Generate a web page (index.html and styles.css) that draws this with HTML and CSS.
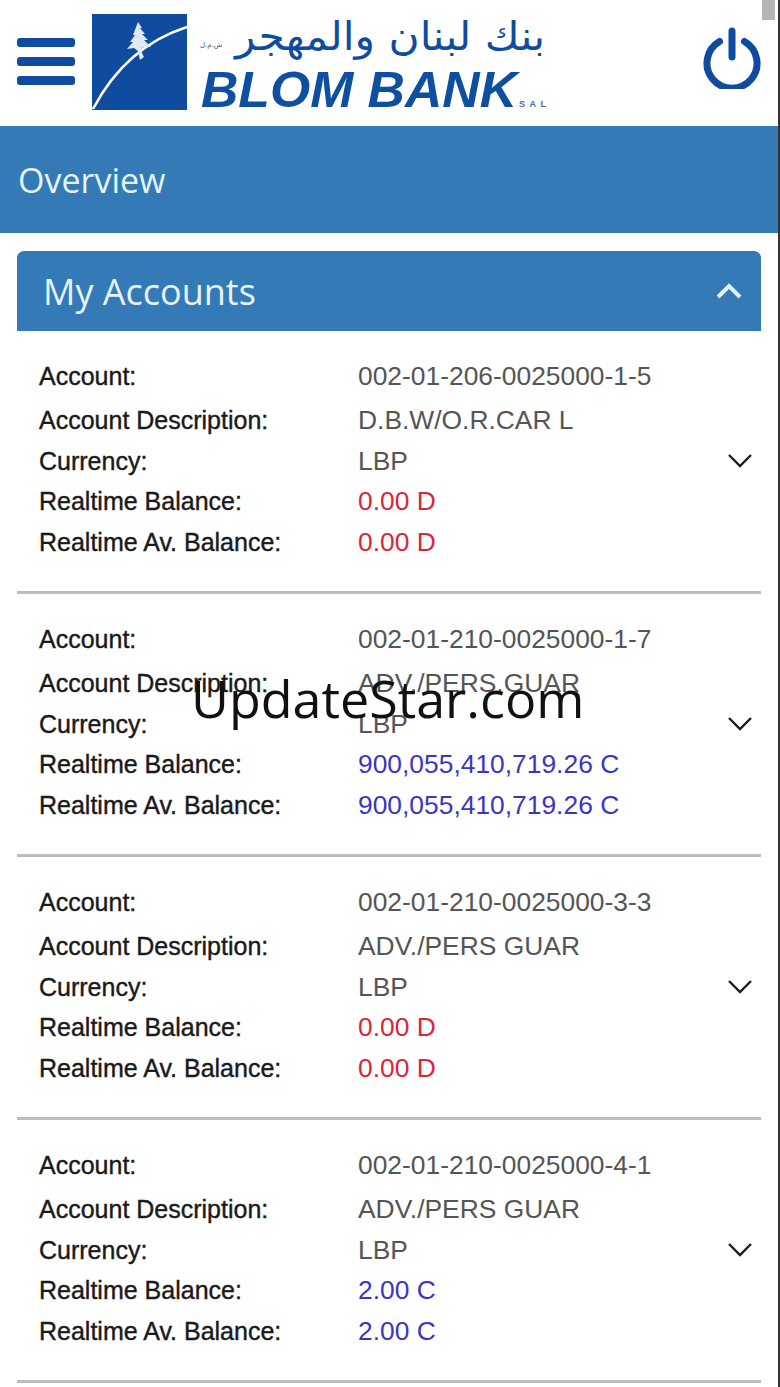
FILE: index.html
```html
<!DOCTYPE html>
<html lang="en">
<head>
<meta charset="utf-8">
<title>BLOM BANK - Overview</title>
<link rel="stylesheet" href="styles.css">
</head>
<body>
<div class="page">
  <header class="topbar">
    <div class="burger"><span></span><span></span><span></span></div>
    <svg class="logo" width="456" height="98" viewBox="0 0 456 98">
      <rect x="1" y="1" width="95" height="96" fill="#0f4c9f"/>
      <path d="M2 96 C 22 58 52 28 96 14" fill="none" stroke="#fff" stroke-width="2.6"/>
      <path d="M47 9 L51 15 L49 15 L54 21 L51 21 L57 27 L53 27 L60 34 L52 34 L50 38 L53 44 L49 47 L47 38 L43 35 L36 36 L42 29 L39 29 L44 22 L42 22 Z" fill="#dfe8f3"/>
      <text class="ar" x="454" y="37" text-anchor="end" textLength="310" lengthAdjust="spacingAndGlyphs">بنك لبنان والمهجر</text>
      <text class="ar-small" x="109" y="34">ش.م.ل</text>
      <text class="brand" x="110" y="94" textLength="316" lengthAdjust="spacingAndGlyphs">BLOM BANK</text>
      <text class="sal" x="428" y="94" textLength="27" lengthAdjust="spacing">SAL</text>
    </svg>
    <svg class="power" width="58" height="62" viewBox="0 0 58 62">
      <path d="M16.500 14.500 A25 25 0 1 0 41.500 14.500" fill="none" stroke="#0f4c9f" stroke-width="7" stroke-linecap="round"/>
      <path d="M29 4 V30" fill="none" stroke="#0f4c9f" stroke-width="7" stroke-linecap="round"/>
    </svg>
  </header>
  <div class="title-bar">Overview</div>
  <section class="panel">
    <div class="panel-head">
      <span>My Accounts</span>
      <svg class="chev-up" width="28" height="18" viewBox="0 0 28 18"><path d="M3 15 L14 4 L25 15" fill="none" stroke="#e4f4fb" stroke-width="4"/></svg>
    </div>

    <article class="account">
      <dl class="fields">
        <dt class="first">Account:</dt><dd class="first">002-01-206-0025000-1-5</dd>
        <dt>Account Description:</dt><dd>D.B.W/O.R.CAR L</dd>
        <dt>Currency:</dt><dd>LBP</dd>
        <dt>Realtime Balance:</dt><dd class="debit">0.00 D</dd>
        <dt>Realtime Av. Balance:</dt><dd class="debit">0.00 D</dd>
      </dl>
      <svg class="chev" width="26" height="16" viewBox="0 0 26 16"><path d="M2 2 L13 13 L24 2" fill="none" stroke="#1c1c1c" stroke-width="2.400"/></svg>
    </article>

    <article class="account">
      <dl class="fields">
        <dt class="first">Account:</dt><dd class="first">002-01-210-0025000-1-7</dd>
        <dt>Account Description:</dt><dd>ADV./PERS.GUAR</dd>
        <dt>Currency:</dt><dd>LBP</dd>
        <dt>Realtime Balance:</dt><dd class="credit">900,055,410,719.26 C</dd>
        <dt>Realtime Av. Balance:</dt><dd class="credit">900,055,410,719.26 C</dd>
      </dl>
      <svg class="chev" width="26" height="16" viewBox="0 0 26 16"><path d="M2 2 L13 13 L24 2" fill="none" stroke="#1c1c1c" stroke-width="2.400"/></svg>
    </article>

    <article class="account">
      <dl class="fields">
        <dt class="first">Account:</dt><dd class="first">002-01-210-0025000-3-3</dd>
        <dt>Account Description:</dt><dd>ADV./PERS GUAR</dd>
        <dt>Currency:</dt><dd>LBP</dd>
        <dt>Realtime Balance:</dt><dd class="debit">0.00 D</dd>
        <dt>Realtime Av. Balance:</dt><dd class="debit">0.00 D</dd>
      </dl>
      <svg class="chev" width="26" height="16" viewBox="0 0 26 16"><path d="M2 2 L13 13 L24 2" fill="none" stroke="#1c1c1c" stroke-width="2.400"/></svg>
    </article>

    <article class="account">
      <dl class="fields">
        <dt class="first">Account:</dt><dd class="first">002-01-210-0025000-4-1</dd>
        <dt>Account Description:</dt><dd>ADV./PERS GUAR</dd>
        <dt>Currency:</dt><dd>LBP</dd>
        <dt>Realtime Balance:</dt><dd class="credit">2.00 C</dd>
        <dt>Realtime Av. Balance:</dt><dd class="credit">2.00 C</dd>
      </dl>
      <svg class="chev" width="26" height="16" viewBox="0 0 26 16"><path d="M2 2 L13 13 L24 2" fill="none" stroke="#1c1c1c" stroke-width="2.400"/></svg>
    </article>
  </section>
  <div class="scroll-thumb"></div>
  <div class="watermark">UpdateStar.com</div>
</div>
</body>
</html>
```
FILE: styles.css
```css
* { box-sizing: border-box; }
html, body { margin: 0; padding: 0; background: #fff; }
body { height: 1387px; overflow: hidden; }
.page {
  position: relative;
  width: 780px;
  height: 1387px;
  overflow: hidden;
  border-right: 2px solid #333;
  font-family: "Liberation Sans", Arial, sans-serif;
}
.topbar {
  display: flex;
  align-items: flex-start;
  height: 126px;
  padding: 0 17px;
}
.burger {
  display: flex;
  flex-direction: column;
  gap: 10px;
  width: 58px;
  margin-top: 38px;
}
.burger span {
  display: block;
  height: 9px;
  border-radius: 3px;
  background: #0f4c9f;
}
.logo { margin: 13px 0 0 16px; flex: none; }
.power { margin: 27px 0 0 auto; flex: none; }
.ar { font-family: "DejaVu Sans", sans-serif; font-size: 40px; fill: #0f4c9f; }
.ar-small { font-family: "DejaVu Sans", sans-serif; font-size: 7px; fill: #456; }
.brand { font-family: "Liberation Sans", sans-serif; font-size: 50px; font-weight: 700; font-style: italic; fill: #0f4fa0; }
.sal { font-family: "Liberation Sans", sans-serif; font-size: 9px; font-weight: 700; fill: #3d6fae; }
.title-bar {
  display: flex;
  align-items: center;
  height: 107px;
  padding-left: 18px;
  background: #337ab7;
  color: #e6f3fa;
  font-family: "Open Sans", sans-serif;
  font-size: 34px;
}
.panel { margin: 18px 17px 0; }
.panel-head {
  display: flex;
  align-items: center;
  justify-content: space-between;
  height: 80px;
  padding: 0 18px 0 26px;
  background: #337ab7;
  border-radius: 7px 7px 0 0;
  color: #e6f3fa;
  font-family: "Open Sans", sans-serif;
  font-size: 36px;
}
.account {
  display: flex;
  align-items: center;
  height: 263px;
  padding: 0 8px 0 22px;
  border-bottom: 3px solid #bdbdbd;
}
.fields {
  display: grid;
  grid-template-columns: 319px 1fr;
  grid-auto-rows: 40.500px;
  align-items: center;
  flex: 1;
  margin: 0;
  font-size: 25px;
}
.fields dt { color: #1a1a1a; -webkit-text-stroke: 0.4px #1a1a1a; }
.fields dd { margin: 0; color: #555; font-size: 26.400px; }
.fields .first { margin-bottom: 7px; }
.fields dd.debit { color: #d9263a; }
.fields dd.credit { color: #3c35c4; }
.chev { flex: none; }
.scroll-thumb {
  position: absolute;
  top: 0;
  left: 762px;
  width: 13px;
  height: 20px;
  background: #b5b5b5;
}
.watermark {
  position: absolute;
  left: 191px;
  top: 662px;
  color: #111;
  font-family: "Open Sans", sans-serif;
  font-size: 52px;
  line-height: 72px;
  white-space: nowrap;
}
```
